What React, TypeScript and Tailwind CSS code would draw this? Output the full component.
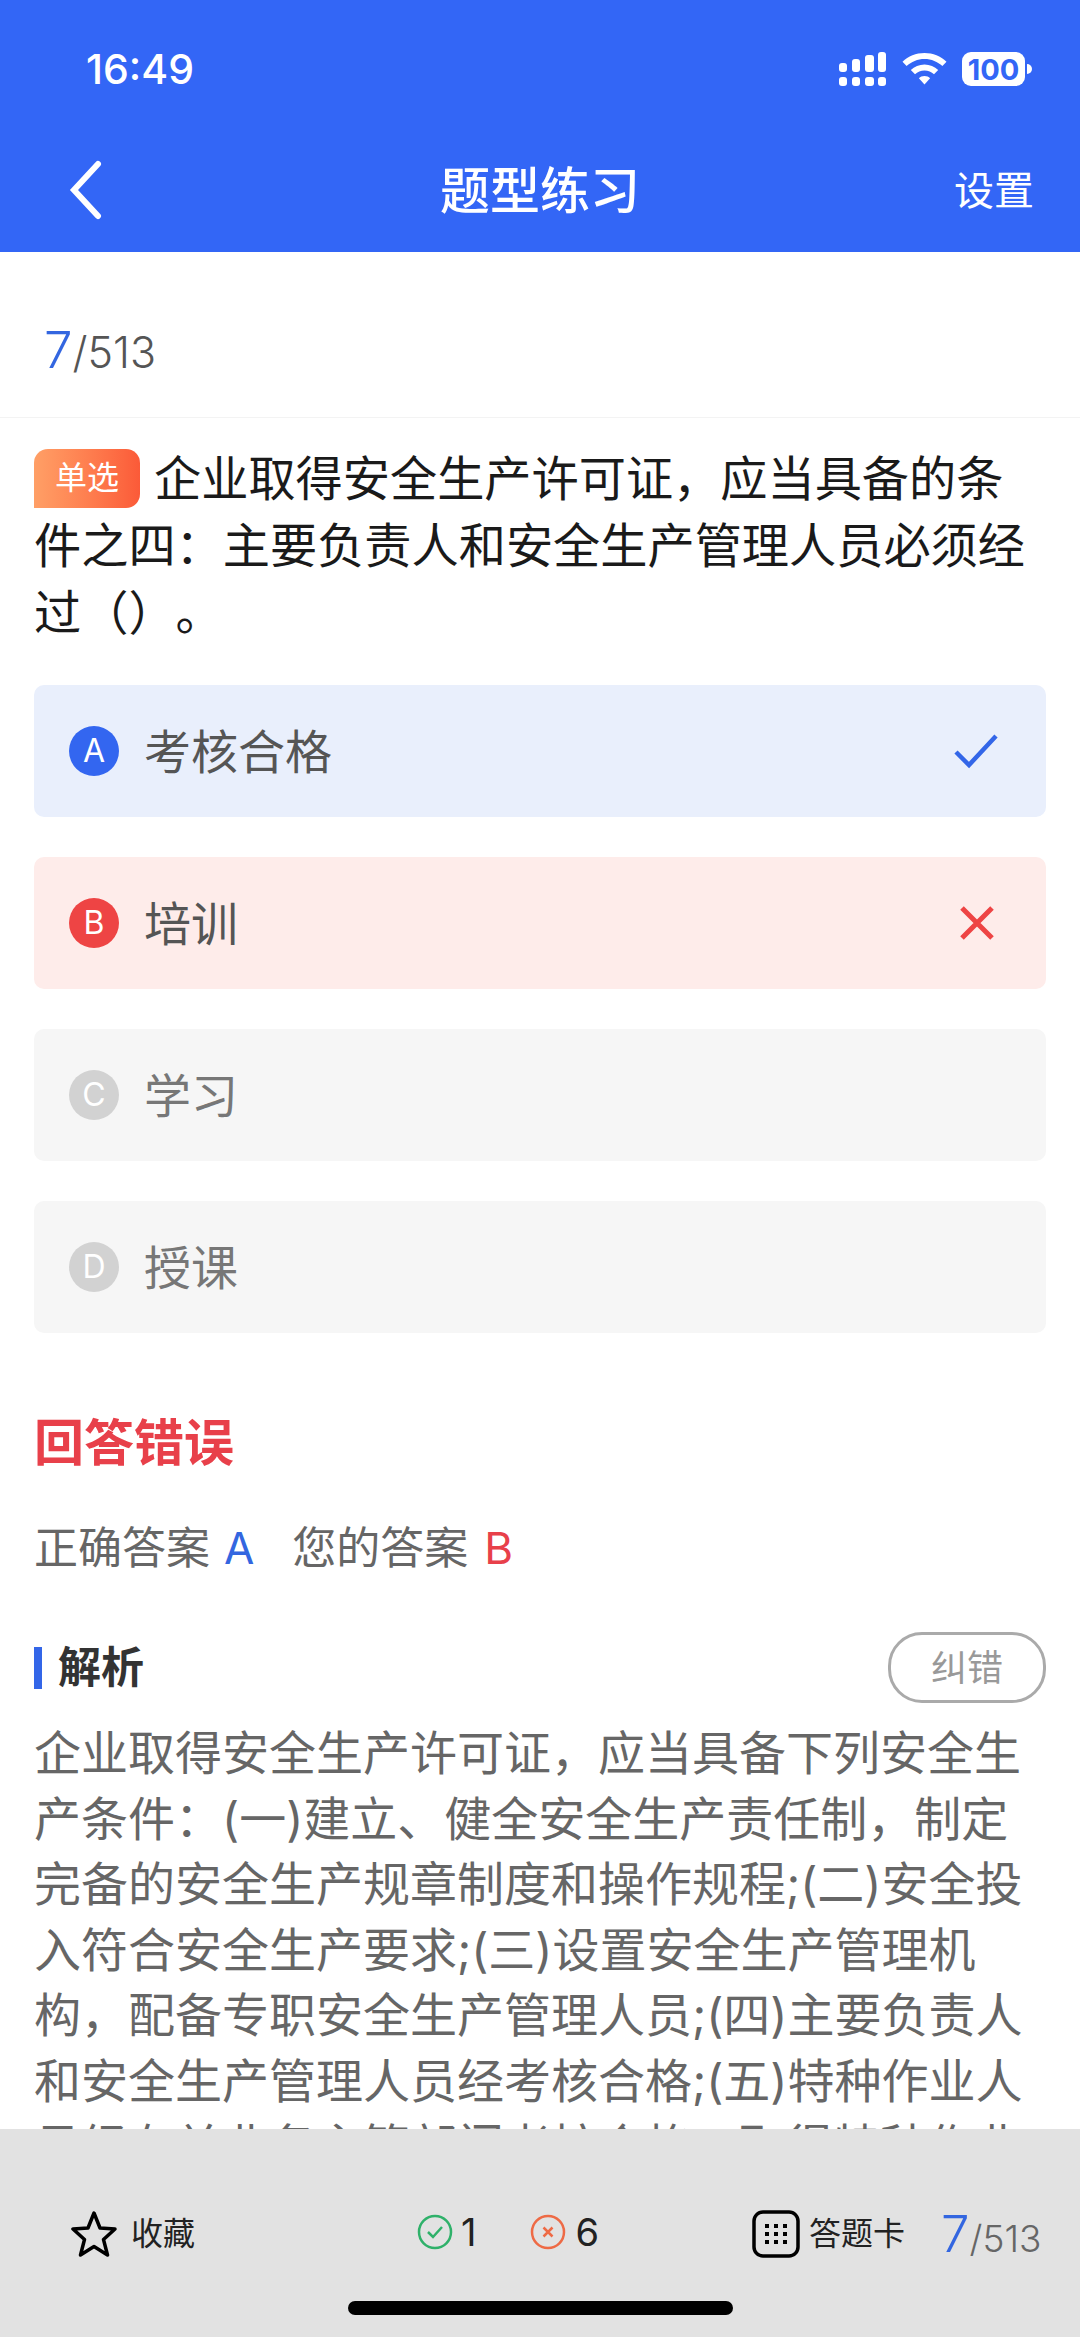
const options = [
  { key: 'A', text: '考核合格', box: 'bg-[#e9effc]', dot: 'bg-[#3366f0]', mark: 'check' },
  { key: 'B', text: '培训', box: 'bg-[#feecea]', dot: 'bg-[#ee4444]', mark: 'cross' },
  { key: 'C', text: '学习', box: 'bg-[#f6f6f6]', dot: 'bg-[#d2d2d2]', mark: '' },
  { key: 'D', text: '授课', box: 'bg-[#f6f6f6]', dot: 'bg-[#d2d2d2]', mark: '' },
]

function StatusIcons() {
  return (
    <div className="flex items-center">
      <svg width="48" height="34" viewBox="0 0 48 34" fill="#fff">
        <rect x="0" y="11" width="8" height="9" rx="3" />
        <rect x="13" y="7" width="8" height="13" rx="3" />
        <rect x="26" y="3" width="9" height="17" rx="3" />
        <rect x="39" y="0" width="8" height="20" rx="3" />
        <rect x="0" y="25" width="8" height="9" rx="3" />
        <rect x="13" y="25" width="8" height="9" rx="3" />
        <rect x="26" y="25" width="9" height="9" rx="3" />
        <rect x="39" y="25" width="8" height="9" rx="3" />
      </svg>
      <svg className="ml-[15px]" width="45" height="32" viewBox="0 0 45 32" fill="#fff">
        <path d="M22.5 0C14 0 6.300 3.300 0.500 8.700L4.600 13C9.300 8.600 15.600 5.900 22.500 5.900S35.700 8.600 40.400 13L44.500 8.700C38.700 3.300 31 0 22.500 0Z" />
        <path d="M22.500 11.500C17.200 11.500 12.400 13.600 8.800 17L13 21.300C15.500 19 18.800 17.500 22.500 17.500S29.500 19 32 21.300L36.200 17C32.600 13.600 27.800 11.500 22.500 11.500Z" />
        <path d="M22.500 23C20.300 23 18.300 23.800 16.900 25.200L22.500 31.500L28.100 25.200C26.700 23.800 24.700 23 22.500 23Z" />
      </svg>
      <div className="ml-[15px] flex h-[34px] w-[63px] items-center justify-center rounded-[9px] bg-white text-[29px] font-bold leading-none text-[#3366f6]">
        100
      </div>
      <div className="ml-[2px] h-[10px] w-[5px] rounded-r-full bg-white" />
    </div>
  )
}

function OptionRow({ item }: { item: (typeof options)[number] }) {
  const textColor = item.mark ? 'text-[#555555]' : 'text-[#777777]'
  return (
    <div className={`flex h-[132px] items-center rounded-[10px] pl-[35px] pr-[48px] ${item.box}`}>
      <span className={`flex h-[50px] w-[50px] items-center justify-center rounded-full text-[32px] leading-none text-white ${item.dot}`}>
        {item.key}
      </span>
      <span className={`ml-[25px] flex-1 text-[47px] leading-none ${textColor}`}>{item.text}</span>
      {item.mark === 'check' && (
        <svg width="44" height="36" viewBox="0 0 44 36" fill="none" stroke="#3366e8" strokeWidth="4.500">
          <path d="M2 19L15 32L42 3" />
        </svg>
      )}
      {item.mark === 'cross' && (
        <svg className="mr-[3px]" width="36" height="36" viewBox="0 0 36 36" fill="none" stroke="#ee4444" strokeWidth="5">
          <path d="M3 3L33 33M33 3L3 33" />
        </svg>
      )}
    </div>
  )
}

export default function App() {
  return (
    <div className="flex h-[2337px] w-[1080px] flex-col overflow-hidden bg-white font-['Inter','Noto_Sans_CJK_SC',sans-serif]">
      <header className="h-[252px] shrink-0 bg-[#3366f6] text-white">
        <div className="flex h-[138px] items-center justify-between pl-[86px] pr-[48px]">
          <span className="text-[41px] font-medium leading-none">16:49</span>
          <StatusIcons />
        </div>
        <div className="relative flex h-[106px] items-center justify-center">
          <svg className="absolute left-[68px] top-[22px]" width="36" height="60" viewBox="0 0 36 60" fill="none" stroke="#fff" strokeWidth="6" strokeLinecap="round">
            <path d="M30 4L6 30L30 56" />
          </svg>
          <span className="text-[50px] font-medium leading-none">题型练习</span>
          <span className="absolute right-[46px] text-[40px] leading-none">设置</span>
        </div>
      </header>

      <main className="min-h-0 flex-1 overflow-hidden">
        <div className="flex h-[166px] items-end border-b border-[#f3f3f3] pb-[42px] pl-[44px]">
          <span className="leading-none">
            <span className="text-[51px] font-light text-[#3366e0]">7</span>
            <span className="text-[43px] font-light text-[#555555]">/513</span>
          </span>
        </div>

        <div className="px-[34px]">
          <p className="mt-[27px] text-[47.200px] leading-[67px] text-[#1a1a1a] [text-spacing-trim:space-all]">
            <span className="mr-[14px] inline-flex h-[59px] w-[106px] items-center justify-center rounded-[14px] rounded-bl-none bg-gradient-to-r from-[#ff9f66] to-[#fb5a38] align-[7px] text-[32px] leading-none text-white">
              单选
            </span>
            企业取得安全生产许可证，应当具备的条件之四：主要负责人和安全生产管理人员必须经过（）。
          </p>

          <div className="mt-[39px] flex flex-col gap-[40px]">
            {options.map((item) => (
              <OptionRow key={item.key} item={item} />
            ))}
          </div>

          <h2 className="mt-[85px] text-[50px] font-bold leading-none text-[#e8404a]">回答错误</h2>

          <div className="mt-[58px] flex items-center text-[44px] leading-none text-[#666666]">
            <span>正确答案</span>
            <span className="ml-[14px] text-[#3366e0]">A</span>
            <span className="ml-[38px]">您的答案</span>
            <span className="ml-[16px] text-[#e8404a]">B</span>
          </div>

          <div className="mt-[62px] flex items-center justify-between">
            <div className="flex items-center">
              <span className="h-[42px] w-[8px] bg-[#3366e8]" />
              <span className="ml-[16px] text-[43px] font-bold leading-none text-[#333333]">解析</span>
            </div>
            <span className="flex h-[71px] w-[158px] items-center justify-center rounded-[34px] border-[3px] border-[#aaaaaa] text-[36px] leading-none text-[#999999]">
              纠错
            </span>
          </div>

          <p className="mt-[17px] text-[47px] leading-[65.500px] text-[#666666]">
            企业取得安全生产许可证，应当具备下列安全生产条件：(一)建立、健全安全生产责任制，制定完备的安全生产规章制度和操作规程;(二)安全投入符合安全生产要求;(三)设置安全生产管理机构，配备专职安全生产管理人员;(四)主要负责人和安全生产管理人员经考核合格;(五)特种作业人员经有关业务主管部门考核合格，取得特种作业操作资格证书;
          </p>
        </div>
      </main>

      <footer className="h-[208px] shrink-0 bg-[#e2e2e2]">
        <div className="flex h-[172px] items-start pt-[81px]">
          <div className="flex w-[417px] items-center pl-[71px]">
            <svg width="46" height="48" viewBox="0 0 46 48" fill="none" stroke="#000" strokeWidth="3.500" strokeLinejoin="round">
              <path d="M23 3L29 18L44 19L32.500 29.500L36.500 45L23 36.500L9.500 45L13.500 29.500L2 19L17 18Z" />
            </svg>
            <span className="ml-[14px] text-[32px] leading-none text-[#222222]">收藏</span>
          </div>

          <div className="mt-[3px] flex w-[335px] items-center">
            <svg width="36" height="36" viewBox="0 0 36 36" fill="none" stroke="#2fb16a" strokeWidth="2.500">
              <circle cx="18" cy="18" r="16" />
              <path d="M11 18L16 23L25 13" />
            </svg>
            <span className="ml-[8px] text-[38px] leading-none text-[#222222]">1</span>
            <svg className="ml-[54px]" width="36" height="36" viewBox="0 0 36 36" fill="none" stroke="#ee6a45" strokeWidth="2.500">
              <circle cx="18" cy="18" r="16" />
              <path d="M13.500 13.500L22.500 22.500M22.500 13.500L13.500 22.500" />
            </svg>
            <span className="ml-[9px] text-[38px] leading-none text-[#222222]">6</span>
          </div>

          <div className="-mt-[2px] flex items-center">
            <svg width="48" height="48" viewBox="0 0 48 48" fill="#000">
              <rect x="2" y="2" width="44" height="44" rx="9" fill="none" stroke="#000" strokeWidth="3.500" />
              <rect x="13" y="14" width="4" height="4" />
              <rect x="22" y="14" width="4" height="4" />
              <rect x="31" y="14" width="4" height="4" />
              <rect x="13" y="22" width="4" height="4" />
              <rect x="22" y="22" width="4" height="4" />
              <rect x="31" y="22" width="4" height="4" />
              <rect x="13" y="30" width="4" height="4" />
              <rect x="22" y="30" width="4" height="4" />
              <rect x="31" y="30" width="4" height="4" />
            </svg>
            <span className="ml-[9px] text-[32px] leading-none text-[#222222]">答题卡</span>
            <span className="ml-[36px] leading-none">
              <span className="text-[51px] font-light text-[#3366e0]">7</span>
              <span className="text-[37px] font-light text-[#666666]">/513</span>
            </span>
          </div>
        </div>
        <div className="mx-auto h-[14px] w-[385px] rounded-full bg-black" />
      </footer>
    </div>
  )
}
